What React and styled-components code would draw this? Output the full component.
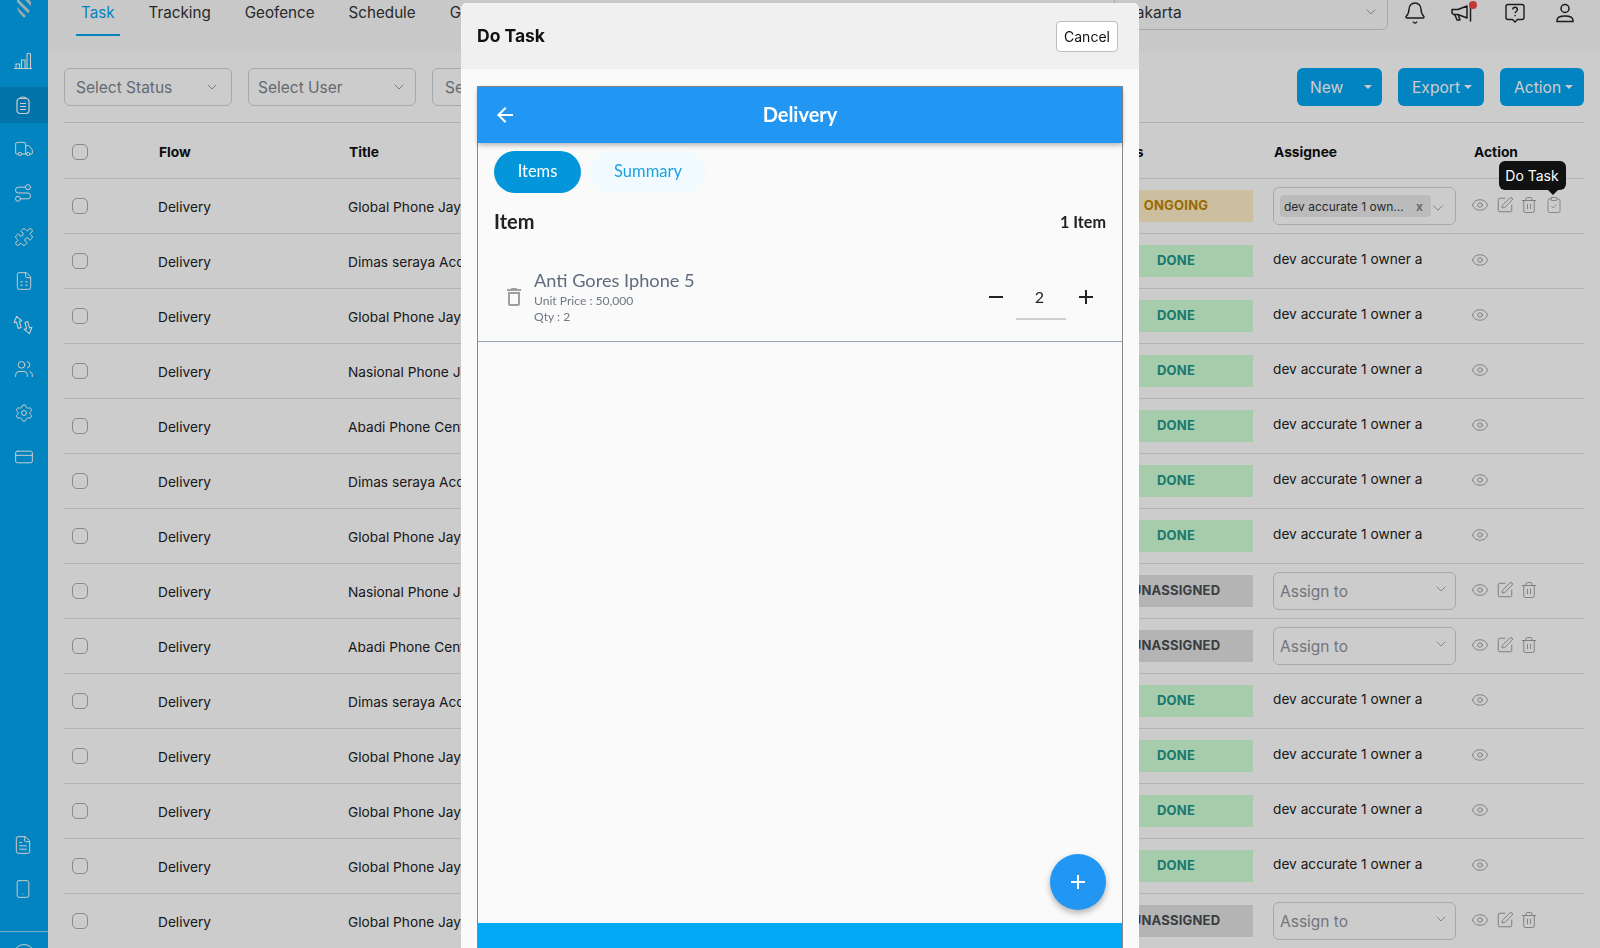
import React from 'react';
import styled, { createGlobalStyle } from 'styled-components';
import {
  Truck, Route, Puzzle, Users, Settings, CreditCard, FileText, FileSpreadsheet, Smartphone, Bell,
  Eye, SquarePen, Trash2, ClipboardCheck, ChevronDown,
} from 'lucide-react';

const Global = createGlobalStyle`
  html, body { margin: 0; padding: 0; height: 948px; overflow: hidden; background: #fff; }
  * { box-sizing: border-box; }
  body { font-family: Inter, "Liberation Sans", sans-serif; color: #1f1f1f; }
`;

const Shell = styled.div`display: flex; width: 1600px; height: 948px; overflow: hidden;`;

const Sidebar = styled.aside`
  width: 48px; flex: none; background: #03a5f0; display: flex; flex-direction: column; color: #fff;
`;
const LogoBox = styled.div`height: 39px; display: flex; justify-content: center; align-items: flex-start; overflow: hidden; padding-right: 1px;`;
const SideGroup = styled.div`display: flex; flex-direction: column;`;
const BottomGroup = styled(SideGroup)`margin-top: auto; padding-bottom: 20px;`;
const SideItem = styled.div`
  height: 36px; margin: 4px 0; display: flex; align-items: center; justify-content: center;
  padding-right: ${p => p.$pr || 0}px;
  background: ${p => (p.$active ? '#0392d4' : 'transparent')};
  svg { display: block; }
`;
const SideFoot = styled.div`
  height: 17px; border-top: 1px solid rgba(255,255,255,.55); overflow: hidden; display: flex; justify-content: center; padding-top: 12px;
`;
const FootCircle = styled.span`width: 22px; height: 22px; border: 1px solid #fff; border-radius: 50%; flex: none;`;

const Main = styled.main`flex: 1; min-width: 0; display: flex; flex-direction: column;`;
const Nav = styled.header`
  height: 52px; flex: none; background: #fafafa; display: flex; align-items: flex-start; padding: 0 23px 0 28px;
`;
const Tabs = styled.nav`display: flex; gap: 24px;`;
const Tab = styled.div`
  height: 36px; padding: 0 5px; font-size: 15.2px; line-height: 26px;
  color: ${p => (p.$active ? '#03a5f0' : '#333')};
  border-bottom: 2px solid ${p => (p.$active ? '#03a5f0' : 'transparent')};
`;
const CitySelect = styled.div`
  margin-left: auto; width: 274px; height: 38px; margin-top: -8px; padding: 0 8px 0 12px;
  border: 1px solid #ced4da; border-radius: 6px; display: flex; align-items: center; justify-content: space-between;
  font-size: 15.5px; color: #333; padding-top: 2px;
`;
const NavIcons = styled.div`display: flex; gap: 26px; margin-left: 15px; padding-top: 1px;`;
const NavIcon = styled.div`position: relative; width: 24px; height: 24px; color: #222; svg { display: block; }`;
const RedDot = styled.span`position: absolute; width: 8px; height: 8px; border-radius: 50%; background: #f04848; top: 0; right: 0;`;

const Content = styled.section`flex: 1; padding: 0 16px; min-height: 0;`;
const Toolbar = styled.div`
  height: 71px; padding: 16px 0; display: flex; justify-content: space-between; border-bottom: 1px solid #d8dbe0;
`;
const Filters = styled.div`display: flex; gap: 16px;`;
const Filter = styled.div`
  width: 168px; height: 38px; border: 1px solid #ced4da; border-radius: 6px; padding: 0 ${p => p.$pr}px 0 ${p => p.$pl}px;
  display: flex; align-items: center; justify-content: space-between; font-size: 15.5px; color: #7d8590;
`;
const Buttons = styled.div`display: flex; gap: 16px;`;
const Btn = styled.div`
  height: 38px; width: ${p => p.$w}px; background: #03a5f0; color: #fff; border-radius: 6px; font-size: 15.6px;
  display: flex; align-items: center; padding: 0 ${p => (p.$split ? 13 : 14)}px; gap: ${p => p.$gap}px;
`;
const Caret = styled.span`
  width: 0; height: 0; border-left: 4.5px solid transparent; border-right: 4.5px solid transparent; border-top: 4.5px solid #fff; margin-top: -1px;
`;

const columns = '94px 190px 751px 174px 200px 111px';
const HeadRow = styled.div`
  display: grid; grid-template-columns: ${columns}; height: 56px; align-items: center; padding-top: 2px;
  border-bottom: 1px solid #dfe2e8; font-size: 13.8px; font-weight: 700; color: #111;
  & > * { padding-left: 1px; }
`;
const Row = styled.div`
  display: grid; grid-template-columns: ${columns}; height: 55px; align-items: center;
  border-bottom: 1px solid #dfe2e8; font-size: 13.7px; color: #222;
`;
const Check = styled.input.attrs({ type: 'checkbox' })`
  appearance: none; width: 16px; height: 16px; margin: 0 0 0 8px; border: 1px solid #adadad; border-radius: 5px; background: transparent; display: block;
`;
const Cell = styled.div`white-space: nowrap; overflow: hidden; padding-top: 1px;`;
const statusColors = {
  DONE: ['#d0ffd7', '#21988a'],
  ONGOING: ['#ffefc8', '#c08500'],
  UNASSIGNED: ['#e2e2e2', '#494d52'],
};
const Status = styled.div`
  width: 154px; height: 32px; display: flex; align-items: center; justify-content: center; padding-bottom: 2px;
  font-size: 13px; font-weight: 700; letter-spacing: .2px;
  background: ${p => statusColors[p.$s][0]}; color: ${p => statusColors[p.$s][1]};
`;
const AssigneeText = styled.div`font-size: 13.7px; padding-bottom: 5px; color: #222;`;
const AssignSelect = styled.div`
  width: 183px; height: 38px; border: 1px solid #ced4da; border-radius: 6px; padding: 0 6px;
  display: flex; align-items: center; position: relative; font-size: 15.5px; color: #8f949b;
`;
const Chip = styled.div`
  width: 151px; height: 22px; border-radius: 4px; background: #eaeaea; padding: 0 4px; flex: none;
  display: flex; align-items: center; justify-content: space-between; font-size: 12px; color: #333;
`;
const ChipX = styled.b`font-size: 12px; color: #888; margin-right: 4px;`;
const SelectArrow = styled.span`margin-left: ${p => (p.$near ? '-2px' : 'auto')}; display: flex; color: #8f949b; margin-top: ${p => p.$up}px;`;
const Actions = styled.div`display: flex; gap: 6.5px; margin: -2px 0 0 -2px; align-items: center; color: #999; svg { display: block; }`;
const ActionIcon = styled.div`position: relative; width: 18px; height: 18px;`;
const Tooltip = styled.div`
  position: absolute; z-index: 1001; right: -3px; bottom: 24px; width: 67px; height: 29px; border-radius: 6px;
  background: #111; color: #fff; font-size: 14px; display: flex; align-items: center; justify-content: center;
  &::after { content: ''; position: absolute; right: 8px; bottom: -5px; border-left: 5px solid transparent; border-right: 5px solid transparent; border-top: 5px solid #111; }
`;

const Backdrop = styled.div`position: fixed; inset: 0; background: rgba(0,0,0,.2); z-index: 1000;`;
const Modal = styled.div`
  position: fixed; z-index: 1002; left: 461px; top: 3px; width: 678px; height: 1000px; overflow: hidden;
  background: #fafafa; border-radius: 6px 6px 0 0;
`;
const ModalHead = styled.div`
  height: 66px; background: #f0f0f0; display: flex; align-items: center; justify-content: space-between; padding: 0 21px 0 16px;
`;
const ModalTitle = styled.h2`margin: 0 0 1px; font-size: 17.5px; font-weight: 700; color: #111; font-family: Inter, sans-serif;`;
const CancelBtn = styled.button`
  width: 62px; height: 31px; background: #fff; border: 1px solid #bdbdbd; border-radius: 4px; font: 14px Inter, sans-serif; color: #111; padding: 0;
`;
const ModalBody = styled.div`padding: 17px 16px 0; font-family: Lato, "Open Sans", sans-serif;`;
const Phone = styled.div`
  height: 897px; border: 1px solid #8a8a8a; border-bottom: 0; display: flex; flex-direction: column;
`;
const AppBar = styled.div`
  height: 56px; flex: none; background: #2196f3; color: #fff; position: relative; display: flex; align-items: center; justify-content: center;
  box-shadow: 0 2px 5px rgba(0,0,0,.3); font-size: 20px; font-weight: 700; padding-bottom: 2px;
`;
const BackBtn = styled.span`position: absolute; left: 15px; top: 16px; display: flex;`;
const PhoneBody = styled.div`flex: 1; position: relative; min-height: 0;`;
const PillRow = styled.div`display: flex; gap: 9px; padding: 8px 0 0 16px;`;
const Pill = styled.div`
  height: 42px; width: ${p => p.$w}px; border-radius: 21px; display: flex; align-items: center; justify-content: center; font-size: 16.5px; padding-bottom: 2px;
  background: ${p => (p.$on ? '#0396da' : '#f1faff')}; color: ${p => (p.$on ? '#fff' : '#1ba3e0')};
`;
const ItemHead = styled.div`
  height: 36px; margin-top: 10px; padding: 0 16px; display: flex; align-items: center; justify-content: space-between;
`;
const ItemTitle = styled.div`font-size: 20px; font-weight: 700; color: #222;`;
const ItemCount = styled.div`font-size: 16.2px; font-weight: 700; color: #222;`;
const ItemRow = styled.div`
  margin-top: 14px; height: 89px; border-bottom: 1px solid #9aa5b5; display: flex; align-items: center; padding: 0 24px;
`;
const ItemIcon = styled.span`display: flex; margin-right: 8px;`;
const ItemInfo = styled.div`display: flex; flex-direction: column; margin-top: -2px;`;
const ItemName = styled.div`font-size: 18.2px; line-height: 26px; color: #5f6b7c;`;
const ItemMeta = styled.div`font-size: 12.1px; line-height: 16px; color: #6f7885;`;
const Stepper = styled.div`margin-left: auto; display: flex; align-items: center; gap: 8px;`;
const StepIcon = styled.span`display: flex;`;
const QtyField = styled.div`
  width: 50px; height: 46px; border-bottom: 2px solid #cfcfcf; display: flex; align-items: center; justify-content: center;
  font-size: 16px; color: #222; padding-right: 3px;
`;
const Fab = styled.div`
  position: absolute; right: 16px; bottom: 13px; width: 56px; height: 56px; border-radius: 50%; background: #2196f3;
  display: flex; align-items: center; justify-content: center; box-shadow: 0 3px 6px rgba(0,0,0,.3);
`;
const BottomBar = styled.div`
  height: 60px; flex: none; background: #03a9f4; color: #fff; text-align: center; padding-top: 20px; font-size: 16px; line-height: 20px; font-weight: 700;
`;

const Bars = () => (
  <svg width="20" height="18" viewBox="0 0 20 18" fill="none" stroke="#fff" strokeWidth="1.1">
    <path d="M1 16.5h18M3 16.5v-4.5h3.5v4.5M8.5 16.5V8H12v8.5M14 16.5V2.5c0-1.6 3.5-1.6 3.5 0v14" />
  </svg>
);
const ClipList = () => (
  <svg width="20" height="20" viewBox="0 0 20 20" fill="none" stroke="#fff" strokeWidth="1.2">
    <rect x="4" y="3.5" width="12" height="15" rx="3" />
    <path d="M7 3.5C7 1.5 13 1.5 13 3.5M7 8.5h6M7 11.5h6M7 14.5h6" />
  </svg>
);
const SwapArrows = () => (
  <svg width="20" height="22" viewBox="0 0 20 22" fill="none" stroke="#fff" strokeWidth="1.1" strokeLinejoin="round" style={{ transform: 'rotate(-15deg)' }}>
    <path d="M6 1 2 6.5h2.5v6.5h3V6.500H10zM14 21l4-5.500h-2.500V9h-3v6.500H10z" />
  </svg>
);
const MegaphoneIcon = () => (
  <svg width="24" height="24" viewBox="0 0 24 24" fill="none" stroke="#222" strokeWidth="1.5" strokeLinejoin="round" strokeLinecap="round" style={{ transform: 'translateX(-3px)' }}>
    <path d="M2 8.500h6L17 5v12l-9-3.500H3.500L2 12z" />
    <path d="M5 14l2 5h3l-1.500-4.500M20.500 6v14" />
  </svg>
);
const UserIcon = () => (
  <svg width="24" height="24" viewBox="0 0 24 24" fill="none" stroke="#222" strokeWidth="1.5">
    <circle cx="12" cy="7.500" r="4" />
    <path d="M4 20.500v-1c0-3 3.500-4.500 8-4.500s8 1.500 8 4.500v1z" />
  </svg>
);
const HelpBubble = () => (
  <svg width="24" height="24" viewBox="0 0 24 24" fill="none" stroke="#222" strokeWidth="1.4">
    <path d="M5 3.500h14c1.200 0 2 .8 2 2v11c0 1.200-.8 2-2 2h-4.500L12 21l-2.500-2.500H5c-1.200 0-2-.8-2-2v-11c0-1.200.8-2 2-2z" />
    <path d="M9.800 8.500c0-3 4.600-3 4.600 0 0 2-2.300 2-2.300 3.800M12.100 14v1.200" />
  </svg>
);
const Logo = () => (
  <svg width="14" height="18" viewBox="0 0 14 18" fill="none">
    <clipPath id="logo-clip"><path d="M0 0h14v6.500C14 11 10 15 7 18 4 15 0 11 0 6.500z" /></clipPath>
    <g clipPath="url(#logo-clip)" stroke="#c9d6dc" strokeWidth="2.800">
      <path d="M-3 -3 13 13M3 -7 19 9M-6 3 9 18" />
    </g>
  </svg>
);
const MatTrash = () => (
  <svg width="24" height="24" viewBox="0 0 24 24" fill="#9e9e9e"><path d="M6 19c0 1.100.9 2 2 2h8c1.100 0 2-.9 2-2V7H6v12zM8 9h8v10H8V9zm7.500-5l-1-1h-5l-1 1H5v2h14V4z" /></svg>
);
const Mat = ({ d, fill = '#222' }) => (
  <svg width="24" height="24" viewBox="0 0 24 24" fill={fill}><path d={d} /></svg>
);
const PLUS = 'M19 13h-6v6h-2v-6H5v-2h6V5h2v6h6v2z';

const sideTop = [
  [<Bars />, 3],
  [<ClipList />, 3],
  [<Truck size={20} strokeWidth={1.2} />, 0],
  [<Route size={20} strokeWidth={1.2} />, 3],
  [<Puzzle size={20} strokeWidth={1.2} />, 0],
  [<FileSpreadsheet size={20} strokeWidth={1.2} />, 0],
  [<SwapArrows />, 3],
  [<Users size={20} strokeWidth={1.2} />, 0],
  [<Settings size={20} strokeWidth={1.2} />, 0],
  [<CreditCard size={20} strokeWidth={1.2} />, 0],
];

const D = 'DONE', U = 'UNASSIGNED', O = 'ONGOING';
const rows = [
  ['Global Phone Jaya Accessories', O],
  ['Dimas seraya Accessories', D],
  ['Global Phone Jaya Accessories', D],
  ['Nasional Phone Jaya', D],
  ['Abadi Phone Center', D],
  ['Dimas seraya Accessories', D],
  ['Global Phone Jaya Accessories', D],
  ['Nasional Phone Jaya', U],
  ['Abadi Phone Center', U],
  ['Dimas seraya Accessories', D],
  ['Global Phone Jaya Accessories', D],
  ['Global Phone Jaya Accessories', D],
  ['Global Phone Jaya Accessories', D],
  ['Global Phone Jaya Accessories', U],
];

function Assignee({ status }) {
  if (status === O) {
    return (
      <AssignSelect>
        <Chip>dev accurate 1 own...<ChipX>x</ChipX></Chip>
        <SelectArrow $near $up={3}><ChevronDown size={18} strokeWidth={1.2} /></SelectArrow>
      </AssignSelect>
    );
  }
  if (status === U) {
    return (
      <AssignSelect>
        Assign to
        <SelectArrow $up={-4}><ChevronDown size={16} strokeWidth={1.2} /></SelectArrow>
      </AssignSelect>
    );
  }
  return <AssigneeText>dev accurate 1 owner a</AssigneeText>;
}

function RowActions({ status }) {
  return (
    <Actions>
      <ActionIcon><Eye size={18} strokeWidth={1.2} /></ActionIcon>
      {status !== D && <ActionIcon><SquarePen size={18} strokeWidth={1.3} /></ActionIcon>}
      {status !== D && <ActionIcon><Trash2 size={18} strokeWidth={1.2} /></ActionIcon>}
      {status === O && (
        <ActionIcon>
          <ClipboardCheck size={18} strokeWidth={1.1} />
          <Tooltip>Do Task</Tooltip>
        </ActionIcon>
      )}
    </Actions>
  );
}

export default function App() {
  return (
    <>
      <Global />
      <Shell>
        <Sidebar>
          <LogoBox><Logo /></LogoBox>
          <SideGroup>
            {sideTop.map(([icon, pr], i) => <SideItem key={i} $active={i === 1} $pr={pr}>{icon}</SideItem>)}
          </SideGroup>
          <BottomGroup>
            <SideItem $pr={3}><FileText size={20} strokeWidth={1.2} /></SideItem>
            <SideItem $pr={3}><Smartphone size={20} strokeWidth={1.2} /></SideItem>
          </BottomGroup>
          <SideFoot><FootCircle /></SideFoot>
        </Sidebar>
        <Main>
          <Nav>
            <Tabs>
              <Tab $active>Task</Tab>
              <Tab>Tracking</Tab>
              <Tab>Geofence</Tab>
              <Tab>Schedule</Tab>
              <Tab>Geotag</Tab>
            </Tabs>
            <CitySelect>Jakarta<ChevronDown size={16} strokeWidth={1.2} color="#888" /></CitySelect>
            <NavIcons>
              <NavIcon><Bell size={24} strokeWidth={1.4} /></NavIcon>
              <NavIcon><MegaphoneIcon /><RedDot /></NavIcon>
              <NavIcon><HelpBubble /></NavIcon>
              <NavIcon><UserIcon /></NavIcon>
            </NavIcons>
          </Nav>
          <Content>
            <Toolbar>
              <Filters>
                <Filter $pl={11} $pr={11}>Select Status<ChevronDown size={16} strokeWidth={1.2} /></Filter>
                <Filter $pl={9} $pr={8}>Select User<ChevronDown size={16} strokeWidth={1.2} /></Filter>
                <Filter $pl={12} $pr={13}>Select Date<ChevronDown size={16} strokeWidth={1.2} /></Filter>
              </Filters>
              <Buttons>
                <Btn $w={85} $gap={21} $split>New<Caret /></Btn>
                <Btn $w={86} $gap={4}>Export<Caret /></Btn>
                <Btn $w={84} $gap={4}>Action<Caret /></Btn>
              </Buttons>
            </Toolbar>
            <HeadRow>
              <Check readOnly />
              <div>Flow</div>
              <div>Title</div>
              <div>Status</div>
              <div>Assignee</div>
              <div>Action</div>
            </HeadRow>
            {rows.map(([title, status], i) => (
              <Row key={i}>
                <Check readOnly />
                <Cell>Delivery</Cell>
                <Cell>{title}</Cell>
                <Status $s={status}>{status}</Status>
                <Assignee status={status} />
                <RowActions status={status} />
              </Row>
            ))}
          </Content>
        </Main>
      </Shell>
      <Backdrop />
      <Modal>
        <ModalHead>
          <ModalTitle>Do Task</ModalTitle>
          <CancelBtn>Cancel</CancelBtn>
        </ModalHead>
        <ModalBody>
          <Phone>
            <AppBar>
              <BackBtn><Mat fill="#fff" d="M20 11H7.830l5.590-5.590L12 4l-8 8 8 8 1.410-1.410L7.830 13H20v-2z" /></BackBtn>
              Delivery
            </AppBar>
            <PhoneBody>
              <PillRow>
                <Pill $w={87} $on>Items</Pill>
                <Pill $w={116}>Summary</Pill>
              </PillRow>
              <ItemHead>
                <ItemTitle>Item</ItemTitle>
                <ItemCount>1 Item</ItemCount>
              </ItemHead>
              <ItemRow>
                <ItemIcon><MatTrash /></ItemIcon>
                <ItemInfo>
                  <ItemName>Anti Gores Iphone 5</ItemName>
                  <ItemMeta>Unit Price : 50,000</ItemMeta>
                  <ItemMeta>Qty : 2</ItemMeta>
                </ItemInfo>
                <Stepper>
                  <StepIcon><Mat d="M19 13H5v-2h14v2z" /></StepIcon>
                  <QtyField>2</QtyField>
                  <StepIcon><Mat d={PLUS} /></StepIcon>
                </Stepper>
              </ItemRow>
              <Fab><Mat fill="#fff" d={PLUS} /></Fab>
            </PhoneBody>
            <BottomBar>Next</BottomBar>
          </Phone>
        </ModalBody>
      </Modal>
    </>
  );
}
